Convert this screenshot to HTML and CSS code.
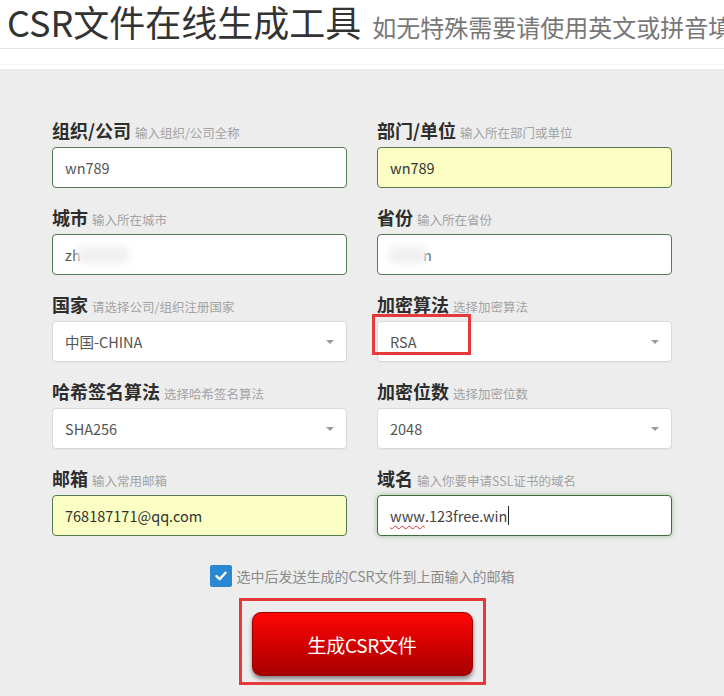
FILE: index.html
```html
<!DOCTYPE html>
<html lang="zh-CN">
<head>
<meta charset="utf-8">
<title>CSR文件在线生成工具</title>
<link rel="stylesheet" href="styles.css">
</head>
<body>
<header class="page-header">
  <h1 class="title">CSR文件在线生成工具<small class="subtitle">如无特殊需要请使用英文或拼音填写</small></h1>
</header>
<div class="spacer"></div>
<main class="panel">
  <form class="form-grid">
    <div class="group">
      <label class="label">组织/公司<span class="hint">输入组织/公司全称</span></label>
      <div class="field">wn789</div>
    </div>
    <div class="group">
      <label class="label">部门/单位<span class="hint">输入所在部门或单位</span></label>
      <div class="field autofill">wn789</div>
    </div>
    <div class="group">
      <label class="label">城市<span class="hint">输入所在城市</span></label>
      <div class="field">zh<span class="blur blur-city"></span></div>
    </div>
    <div class="group">
      <label class="label">省份<span class="hint">输入所在省份</span></label>
      <div class="field"><span class="blur blur-prov"></span>n</div>
    </div>
    <div class="group">
      <label class="label">国家<span class="hint">请选择公司/组织注册国家</span></label>
      <div class="field select">中国-CHINA<span class="caret"></span></div>
    </div>
    <div class="group">
      <label class="label">加密算法<span class="hint">选择加密算法</span></label>
      <div class="field select annotated">RSA<span class="caret"></span><span class="annot annot-rsa"></span></div>
    </div>
    <div class="group">
      <label class="label">哈希签名算法<span class="hint">选择哈希签名算法</span></label>
      <div class="field select">SHA256<span class="caret"></span></div>
    </div>
    <div class="group">
      <label class="label">加密位数<span class="hint">选择加密位数</span></label>
      <div class="field select">2048<span class="caret"></span></div>
    </div>
    <div class="group">
      <label class="label">邮箱<span class="hint">输入常用邮箱</span></label>
      <div class="field autofill">768187171@qq.com</div>
    </div>
    <div class="group">
      <label class="label">域名<span class="hint">输入你要申请SSL证书的域名</span></label>
      <div class="field focus"><span class="spell">www</span>.123free.win<span class="cursor"></span></div>
    </div>
  </form>
  <div class="check-row">
    <span class="checkbox"><svg width="14" height="14" viewBox="0 0 14 14"><path d="M2.5 7.2 L5.6 10.2 L11.5 3.8" fill="none" stroke="#fff" stroke-width="2.4" stroke-linecap="round" stroke-linejoin="round"/></svg></span>
    <span class="check-text">选中后发送生成的CSR文件到上面输入的邮箱</span>
  </div>
  <div class="btn-row">
    <div class="btn-wrap">
      <button type="button" class="btn-generate">生成CSR文件</button>
      <span class="annot annot-btn"></span>
    </div>
  </div>
</main>
</body>
</html>
```
FILE: styles.css
```css
html, body {
  margin: 0;
  padding: 0;
}
body {
  height: 100vh;
  overflow: hidden;
  display: flex;
  flex-direction: column;
  background: #fff;
  font-family: "Noto Sans CJK SC", "Noto Sans", sans-serif;
  color: #333;
}
.page-header {
  height: 48px;
  border-bottom: 1px solid #e3e3e3;
  padding-left: 7px;
  overflow: hidden;
}
.title {
  margin: 0;
  white-space: nowrap;
  font-size: 36px;
  line-height: 42px;
  font-weight: 400;
  color: #333;
}
.subtitle {
  font-size: 24px;
  color: #777;
  margin-left: 11px;
  font-weight: 400;
}
.spacer {
  height: 15px;
  border-bottom: 1px solid #f5f5f5;
  margin-bottom: 4px;
}
.panel {
  flex: 1;
  background: #ededed;
  padding-top: 49px;
}
.form-grid {
  display: grid;
  grid-template-columns: 295px 295px;
  column-gap: 30px;
  justify-content: center;
  margin: 0;
}
.group {
  margin-bottom: 17px;
}
.label {
  display: block;
  height: 24px;
  line-height: 24px;
  margin-bottom: 5px;
  font-size: 18px;
  font-weight: 700;
  color: #2d2d2d;
  white-space: nowrap;
}
.hint {
  font-size: 12.5px;
  font-weight: 400;
  color: #a3a3a3;
  margin-left: 4px;
}
.field {
  position: relative;
  height: 41px;
  box-sizing: border-box;
  border: 1px solid #557a52;
  border-radius: 4px;
  background: #fff;
  padding: 0 12px;
  display: flex;
  align-items: center;
  font-size: 14.5px;
  color: #555;
  white-space: nowrap;
}
.autofill {
  background: #fbffc3;
  color: #333;
}
.select {
  border-color: #d9d9d9;
  box-shadow: 0 1px 1px rgba(0,0,0,0.04);
}
.caret {
  margin-left: auto;
  width: 0;
  height: 0;
  border-left: 4px solid transparent;
  border-right: 4px solid transparent;
  border-top: 4px solid #999;
}
.focus {
  border-color: #3f6b3d;
  box-shadow: 0 0 5px rgba(90, 160, 80, 0.55);
  color: #444;
}
.spell {
  text-decoration: underline wavy #e03030;
  text-decoration-thickness: 1px;
  text-underline-offset: 3px;
}
.cursor {
  display: inline-block;
  width: 1px;
  height: 19px;
  background: #222;
  margin-left: 1px;
}
.blur {
  display: inline-block;
  height: 18px;
  background: #f1f1f1;
  filter: blur(3px);
  border-radius: 6px;
}
.blur-city {
  width: 52px;
  margin-left: -4px;
}
.blur-prov {
  width: 38px;
  margin-right: -4px;
  margin-left: -1px;
}
.annot {
  position: absolute;
  box-sizing: border-box;
  border: 3px solid #e5393b;
  pointer-events: none;
}
.annot-rsa {
  left: -6px;
  top: -8px;
  width: 99px;
  height: 41px;
}
.check-row {
  margin-top: 12px;
  display: flex;
  justify-content: center;
  align-items: center;
  gap: 5px;
  height: 22px;
}
.checkbox {
  width: 22px;
  height: 22px;
  border-radius: 2px;
  background: #2a87d2;
  display: flex;
  align-items: center;
  justify-content: center;
}
.check-text {
  font-size: 14px;
  color: #8a8a8a;
}
.btn-row {
  margin-top: 25px;
  display: flex;
  justify-content: center;
}
.btn-wrap {
  position: relative;
}
.btn-generate {
  display: block;
  width: 221px;
  height: 64px;
  border: 1px solid #9a0000;
  border-radius: 9px;
  background: linear-gradient(#ff0606, #d00000 55%, #a60000);
  box-shadow: 0 3px 4px rgba(0,0,0,0.45);
  color: #fff;
  font-family: "Noto Sans CJK SC", sans-serif;
  font-size: 19px;
  letter-spacing: -0.3px;
}
.annot-btn {
  left: -13px;
  top: -14px;
  width: 247px;
  height: 87px;
}
```
